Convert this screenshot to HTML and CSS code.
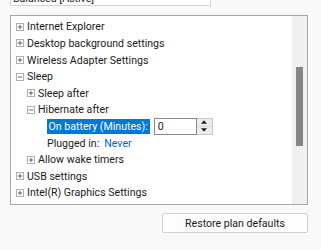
FILE: index.html
```html
<!DOCTYPE html>
<html>
<head>
<meta charset="utf-8">
<link rel="stylesheet" href="styles.css">
</head>
<body>
<div class="combo"><span>Balanced [Active]</span></div>
<div class="list">
  <div class="tree">
    <div class="row l0"><svg class="box" viewBox="0 0 9 9"><rect x="0.5" y="0.5" width="8" height="8" fill="#fff" stroke="#a8a8a8"/><path d="M2 4.5h5M4.5 2v5" stroke="#555" stroke-width="1"/></svg><span>Internet Explorer</span></div>
    <div class="row l0"><svg class="box" viewBox="0 0 9 9"><rect x="0.5" y="0.5" width="8" height="8" fill="#fff" stroke="#a8a8a8"/><path d="M2 4.5h5M4.5 2v5" stroke="#555" stroke-width="1"/></svg><span>Desktop background settings</span></div>
    <div class="row l0"><svg class="box" viewBox="0 0 9 9"><rect x="0.5" y="0.5" width="8" height="8" fill="#fff" stroke="#a8a8a8"/><path d="M2 4.5h5M4.5 2v5" stroke="#555" stroke-width="1"/></svg><span>Wireless Adapter Settings</span></div>
    <div class="row l0"><svg class="box" viewBox="0 0 9 9"><rect x="0.5" y="0.5" width="8" height="8" fill="#fff" stroke="#a8a8a8"/><path d="M2 4.5h5" stroke="#555" stroke-width="1"/></svg><span>Sleep</span></div>
    <div class="row l1"><svg class="box" viewBox="0 0 9 9"><rect x="0.5" y="0.5" width="8" height="8" fill="#fff" stroke="#a8a8a8"/><path d="M2 4.5h5M4.5 2v5" stroke="#555" stroke-width="1"/></svg><span>Sleep after</span></div>
    <div class="row l1"><svg class="box" viewBox="0 0 9 9"><rect x="0.5" y="0.5" width="8" height="8" fill="#fff" stroke="#a8a8a8"/><path d="M2 4.5h5" stroke="#555" stroke-width="1"/></svg><span>Hibernate after</span></div>
    <div class="row l2"><span class="sel">On battery (Minutes):</span><div class="num">0</div><div class="spin"><div class="sb"><svg viewBox="0 0 7 4" class="tri"><path d="M0 4L3.5 0L7 4Z" fill="#222"/></svg></div><div class="sb"><svg viewBox="0 0 7 4" class="tri"><path d="M0 0L3.5 4L7 0Z" fill="#222"/></svg></div></div></div>
    <div class="row l2"><span>Plugged in:</span><span class="link">Never</span></div>
    <div class="row l1"><svg class="box" viewBox="0 0 9 9"><rect x="0.5" y="0.5" width="8" height="8" fill="#fff" stroke="#a8a8a8"/><path d="M2 4.5h5M4.5 2v5" stroke="#555" stroke-width="1"/></svg><span>Allow wake timers</span></div>
    <div class="row l0"><svg class="box" viewBox="0 0 9 9"><rect x="0.5" y="0.5" width="8" height="8" fill="#fff" stroke="#a8a8a8"/><path d="M2 4.5h5M4.5 2v5" stroke="#555" stroke-width="1"/></svg><span>USB settings</span></div>
    <div class="row l0"><svg class="box" viewBox="0 0 9 9"><rect x="0.5" y="0.5" width="8" height="8" fill="#fff" stroke="#a8a8a8"/><path d="M2 4.5h5M4.5 2v5" stroke="#555" stroke-width="1"/></svg><span>Intel(R) Graphics Settings</span></div>
    <div class="row l0"><svg class="box" viewBox="0 0 9 9"><rect x="0.5" y="0.5" width="8" height="8" fill="#fff" stroke="#a8a8a8"/><path d="M2 4.5h5M4.5 2v5" stroke="#555" stroke-width="1"/></svg><span>Power buttons and lid</span></div>
  </div>
  <div class="scroll"><div class="thumb"></div></div>
</div>
<div class="actions"><button class="btn">Restore plan defaults</button></div>
</body>
</html>
```
FILE: styles.css
```css
html, body { margin: 0; padding: 0; }
body {
  background: #f9f9f9;
  font-family: Roboto, "Noto Sans", sans-serif;
  font-size: 10.6px;
  color: #1a1a1a;
  width: 321px;
  height: 250px;
  overflow: hidden;
}
.combo {
  box-sizing: border-box;
  margin: -16px 0 0 10px;
  width: 201px;
  height: 22px;
  border: 1px solid #d4d4d4;
  background: #fff;
  display: flex;
  align-items: flex-end;
  line-height: 12px;
  padding-left: 2px;
}
.list {
  margin: 9px 0 0 10px;
  width: 296px;
  height: 188px;
  border: 1px solid #a6a6a6;
  background: #fff;
  display: flex;
  overflow: hidden;
}
.tree {
  flex: 1;
  padding-top: 2.6px;
  overflow: hidden;
}
.row {
  height: 16.6px;
  display: flex;
  align-items: center;
  white-space: nowrap;
}
.l0 { padding-left: 5px; }
.l1 { padding-left: 16px; }
.l2 { padding-left: 36px; }
.box { width: 8px; height: 8px; margin-right: 3px; flex: none; }
.sel {
  background: #0078d7;
  color: #fff;
  padding: 0 2px 0 1.5px;
  height: 15.5px;
  line-height: 15.5px;
}
.num {
  margin-left: 4px;
  width: 38px;
  height: 15px;
  border: 1px solid #8a8a8a;
  line-height: 15px;
  padding-left: 3px;
  background: #fff;
}
.spin {
  width: 15px;
  height: 15px;
  border: 1px solid #c8c8c8;
  border-left: none;
  display: flex;
  flex-direction: column;
  background: #ececec;
}
.sb {
  flex: 1;
  display: flex;
  align-items: center;
  justify-content: center;
}
.sb + .sb { border-top: 1px solid #d8d8d8; }
.tri { width: 6px; height: 4px; }
.link { color: #0066cc; margin-left: 5px; }
.scroll {
  width: 15px;
  background: #f0f0f0;
  position: relative;
}
.thumb {
  position: absolute;
  left: 4px;
  top: 51px;
  width: 7px;
  height: 79px;
  background: #858585;
}
.actions {
  display: flex;
  justify-content: flex-end;
  padding: 8px 13px 0 0;
}
.btn {
  width: 146px;
  height: 20px;
  background: #fdfdfd;
  border: 1px solid #d0d0d0;
  border-radius: 2px;
  font-family: Roboto, "Noto Sans", sans-serif;
  font-size: 10.6px;
  color: #1a1a1a;
  padding: 0;
}
```
